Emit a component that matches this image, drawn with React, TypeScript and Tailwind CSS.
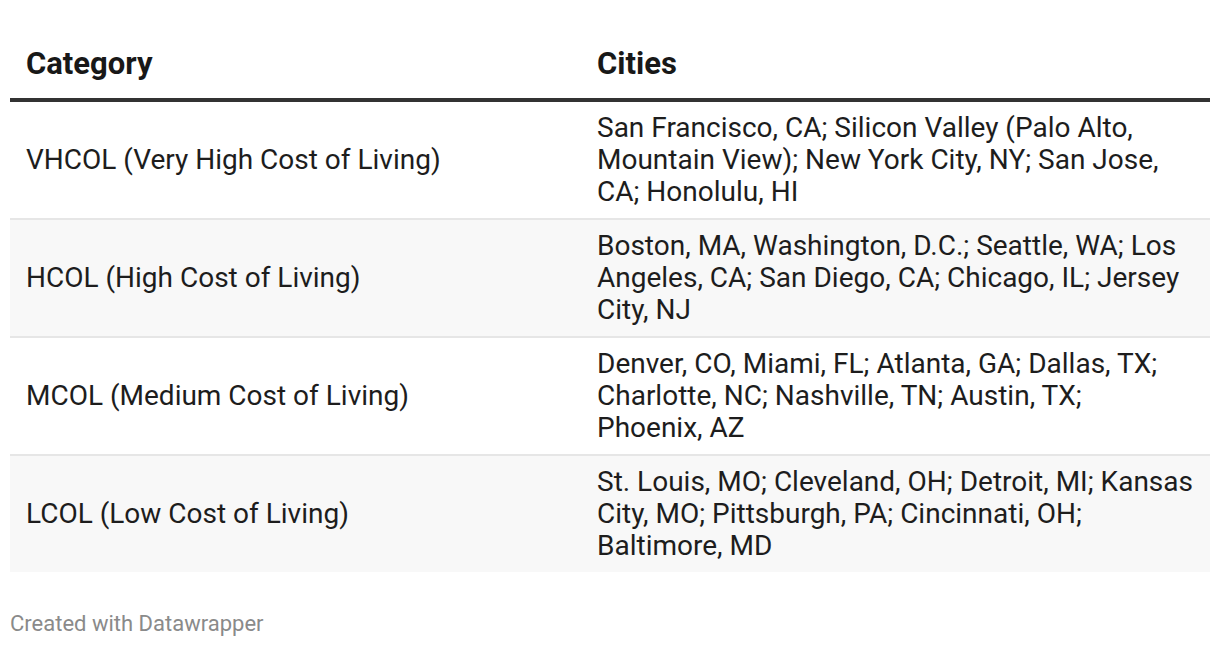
const rows = [
  {
    category: "VHCOL (Very High Cost of Living)",
    cities: "San Francisco, CA; Silicon Valley (Palo Alto, Mountain View); New York City, NY; San Jose, CA; Honolulu, HI",
  },
  {
    category: "HCOL (High Cost of Living)",
    cities: "Boston, MA, Washington, D.C.; Seattle, WA; Los Angeles, CA; San Diego, CA; Chicago, IL; Jersey City, NJ",
  },
  {
    category: "MCOL (Medium Cost of Living)",
    cities: "Denver, CO, Miami, FL; Atlanta, GA; Dallas, TX; Charlotte, NC; Nashville, TN; Austin, TX; Phoenix, AZ",
  },
  {
    category: "LCOL (Low Cost of Living)",
    cities: "St. Louis, MO; Cleveland, OH; Detroit, MI; Kansas City, MO; Pittsburgh, PA; Cincinnati, OH; Baltimore, MD",
  },
]

export default function App() {
  return (
    <div className="min-h-[648px] w-[1220px] bg-white px-[10px] pt-[48px] font-['Roboto',sans-serif] text-[#1d1d1d]">
      <table className="w-[1200px] table-fixed border-collapse">
        <thead>
          <tr className="border-b-4 border-[#333333]">
            <th className="w-[571px] px-4 pb-[18px] text-left text-[31px] leading-[32px] font-bold text-[#181818]">Category</th>
            <th className="px-4 pb-[18px] text-left text-[31px] leading-[32px] font-bold text-[#181818]">Cities</th>
          </tr>
        </thead>
        <tbody>
          {rows.map((row, i) => (
            <tr
              key={row.category}
              className={`${i % 2 === 1 ? "bg-[#f8f8f8]" : "bg-white"} ${i < rows.length - 1 ? "border-b-2 border-[#e6e6e6]" : ""}`}
            >
              <td className="px-4 py-[10px] align-middle text-[28px] leading-[32px]">{row.category}</td>
              <td className="px-4 py-[10px] align-middle text-[28px] leading-[32px]">{row.cities}</td>
            </tr>
          ))}
        </tbody>
      </table>
      <div className="mt-[40px] text-[22px] leading-[24px] text-[#8a8a8a]">Created with Datawrapper</div>
    </div>
  )
}
